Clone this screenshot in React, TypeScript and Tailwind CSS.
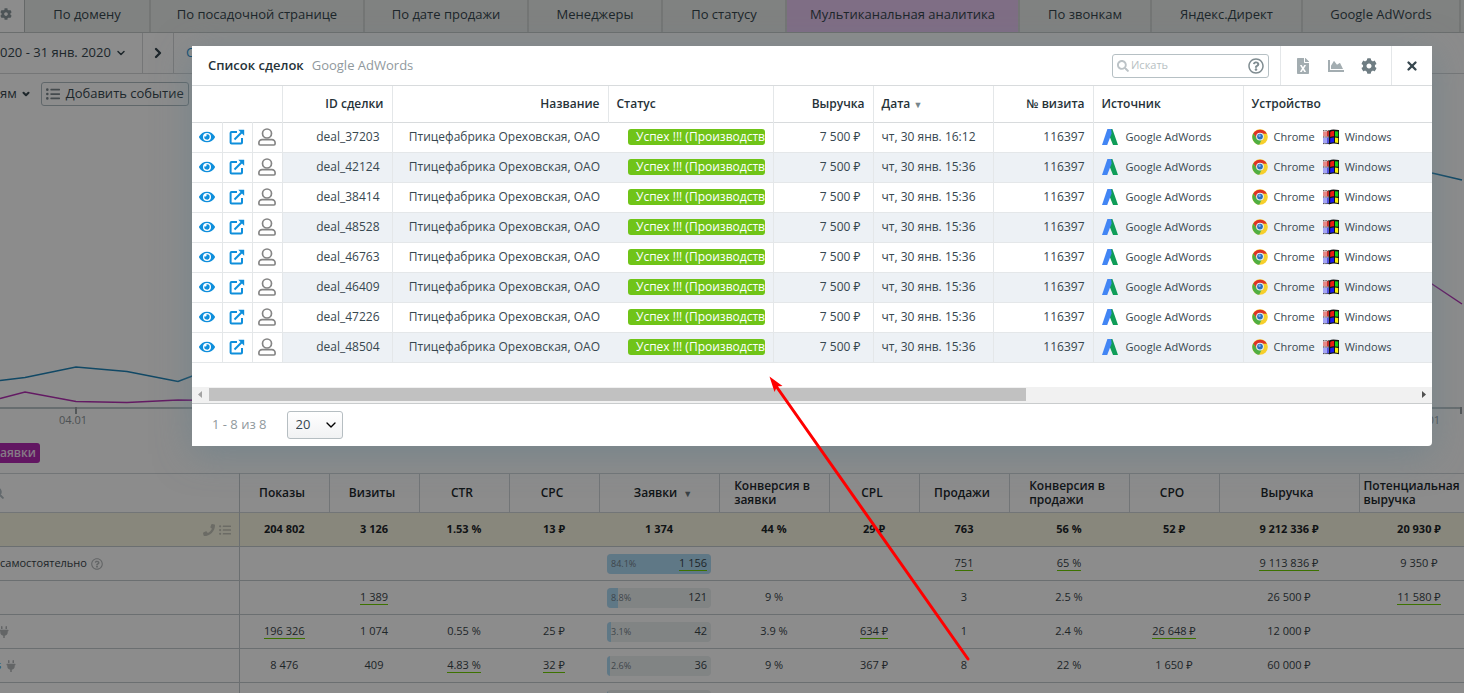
import type { ReactNode } from "react";
import {
  FaChartArea,
  FaCog,
  FaEye,
  FaFileExcel,
  FaListUl,
  FaPhone,
  FaPlug,
  FaRegQuestionCircle,
  FaSearch,
} from "react-icons/fa";
import { ChevronDown, ChevronRight, X } from "lucide-react";

const tabs = [
  { label: "По домену", width: "w-[126px]" },
  { label: "По посадочной странице", width: "w-[214px]" },
  { label: "По дате продажи", width: "w-[164px]" },
  { label: "Менеджеры", width: "w-[134px]" },
  { label: "По статусу", width: "w-[124px]" },
  { label: "Мультиканальная аналитика", width: "w-[233px]", accent: true },
  { label: "По звонкам", width: "w-[132px]" },
  { label: "Яндекс.Директ", width: "w-[151px]" },
  { label: "Google AdWords", width: "w-[158px]" },
];

const reportColumns = [
  { label: "Показы", width: "w-[90px] pr-1" },
  { label: "Визиты", width: "w-[90px] pr-1" },
  { label: "CTR", width: "w-[90px] pr-1" },
  { label: "CPC", width: "w-[90px] pr-1" },
  { label: "Заявки", width: "w-[120px] pl-2", sorted: true },
  { label: "Конверсия в заявки", width: "w-[110px] pr-1" },
  { label: "CPL", width: "w-[90px] pr-1" },
  { label: "Продажи", width: "w-[90px] pr-1" },
  { label: "Конверсия в продажи", width: "w-[120px] pr-1" },
  { label: "CPO", width: "w-[90px] pr-1" },
  { label: "Выручка", width: "w-[140px] pr-1" },
  { label: "Потенциальная выручка", width: "w-[120px] pr-4 pl-1" },
];

const totals = ["204 802", "3 126", "1.53 %", "13 ₽", "1 374", "44 %", "29 ₽", "763", "56 %", "52 ₽", "9 212 336 ₽", "20 930 ₽"];

type ReportRow = {
  title: ReactNode;
  share: string;
  fill: number;
  cells: string[];
};

const reportRows: ReportRow[] = [
  {
    title: (
      <>
        самостоятельно <FaRegQuestionCircle className="ml-1 size-3 text-[#b4b8ba]" />
      </>
    ),
    share: "84.1%",
    fill: 100,
    cells: ["", "", "", "", "*1 156", "", "", "*751", "*65 %", "", "*9 113 836 ₽", "9 350 ₽"],
  },
  {
    title: null,
    share: "8.8%",
    fill: 10.5,
    cells: ["", "*1 389", "", "", "121", "9 %", "", "3", "2.5 %", "", "26 500 ₽", "*11 580 ₽"],
  },
  {
    title: <FaPlug className="-ml-0.5 size-3 text-[#b4b8ba]" />,
    share: "3.1%",
    fill: 3.7,
    cells: ["*196 326", "1 074", "0.55 %", "25 ₽", "42", "3.9 %", "*634 ₽", "1", "2.4 %", "*26 648 ₽", "12 000 ₽", ""],
  },
  {
    title: (
      <>
        <span className="-ml-1 text-[#1d8fd1]">s</span> <FaPlug className="ml-1 size-3 text-[#b4b8ba]" />
      </>
    ),
    share: "2.6%",
    fill: 3,
    cells: ["8 476", "409", "*4.83 %", "*32 ₽", "36", "9 %", "367 ₽", "8", "22 %", "1 650 ₽", "60 000 ₽", ""],
  },
  { title: null, share: "", fill: 1, cells: ["", "", "", "", "", "", "", "", "", "", "", ""] },
];

const deals = [
  { id: "deal_37203", date: "чт, 30 янв. 16:12" },
  { id: "deal_42124", date: "чт, 30 янв. 15:36" },
  { id: "deal_38414", date: "чт, 30 янв. 15:36" },
  { id: "deal_48528", date: "чт, 30 янв. 15:36" },
  { id: "deal_46763", date: "чт, 30 янв. 15:36" },
  { id: "deal_46409", date: "чт, 30 янв. 15:36" },
  { id: "deal_47226", date: "чт, 30 янв. 15:36" },
  { id: "deal_48504", date: "чт, 30 янв. 15:36" },
];

function OpenIcon() {
  return (
    <svg viewBox="0 0 16 16" className="size-4" fill="none" stroke="#0f8fdc" strokeWidth="2">
      <path d="M8 3H2.6a1 1 0 0 0-1 1v9.4a1 1 0 0 0 1 1H12a1 1 0 0 0 1-1V9" />
      <path d="M5.5 10.5L13 3" />
      <path d="M9.3 .8H15.2V6.7Z" fill="#0f8fdc" stroke="none" />
    </svg>
  );
}

function PersonIcon() {
  return (
    <svg viewBox="0 0 16 16" className="size-[18px]" fill="none" stroke="#858585" strokeWidth="1.5">
      <circle cx="8" cy="4.9" r="4" />
      <path d="M3.6 10.3h8.8a2.8 2.8 0 0 1 2.8 2.8v1a1 1 0 0 1-1 1H1.8a1 1 0 0 1-1-1v-1a2.8 2.8 0 0 1 2.8-2.8Z" />
    </svg>
  );
}

function AdWordsIcon() {
  return (
    <svg viewBox="0 0 16 16" className="size-4">
      <path d="M6 0H10.4L16 16H11L7 6Z" fill="#0f9d58" />
      <path d="M5.4 0H9.2L9.6 4.500L5.200 16H0Z" fill="#4285f4" />
    </svg>
  );
}

function ChromeIcon() {
  return (
    <svg viewBox="0 0 16 16" className="size-4">
      <circle cx="8" cy="8" r="7.8" fill="#f6cf2c" />
      <path d="M1.2 4.6A7.8 7.8 0 0 1 14.9 4.8L8 4.6L5 10Z" fill="#dd3226" />
      <path d="M1.3 4.2A7.8 7.8 0 0 0 7.2 15.8L9.6 11L4.6 9.4Z" fill="#4fae42" />
      <circle cx="8" cy="7.600" r="3.9" fill="#e8eef4" />
      <circle cx="8" cy="7.600" r="2.9" fill="#2b6fc0" />
      <circle cx="7.600" cy="6.700" r="1.2" fill="#79aee6" />
    </svg>
  );
}

function WindowsIcon() {
  return (
    <svg viewBox="0 0 16 16" className="size-4">
      <path d="M6 1.400C9 0 12 .5 16 1V15.200C12 14.400 10 14.400 6 15.400Z" fill="#111" />
      <path d="M7.2 2.900C8.500 2 10 1.900 11 2V7.300C10 7.200 8.500 7.300 7.200 7.900Z" fill="#ee1a12" />
      <path d="M12 2.200L15.200 2.600V7.800L12 7.400Z" fill="#18d018" />
      <path d="M7.2 9.200C8.500 8.500 10 8.400 11 8.500V13.400C10 13.200 8.500 13.400 7.200 14.100Z" fill="#1c1cf0" />
      <path d="M12 8.600L15.200 9V14L12 13.500Z" fill="#f8f00c" />
      <path d="M0 2.500H6V7.600H0Z" fill="#e58a88" />
      <path d="M0 8.400H6V14.500H0Z" fill="#a4a4f4" />
      <path d="M4 2H6V7.600H4Z" fill="#c8322c" />
      <path d="M4 8.600H6V15H4Z" fill="#5454e0" />
      <path d="M0 1.700H7M0 8H7M0 14.600H7" stroke="#333" strokeWidth=".9" strokeDasharray="1.5 .8" />
    </svg>
  );
}

function TrendChart() {
  return (
    <svg viewBox="0 0 1464 325" className="block h-[325px] w-full shrink-0" preserveAspectRatio="none" fill="none" aria-hidden="true">
      <path d="M0 302H1462" stroke="#bcc6ca" strokeWidth="2" />
      <path d="M76 301V308M1461 301V308" stroke="#99a1a4" strokeWidth="2" />
      <path d="M0 274.500L25 271.500L76 261L127 265.500L178 275.500L229 256L1400 50L1432 67L1462 74" stroke="#1f84b8" strokeWidth="1.500" />
      <path d="M0 292.500L25 286L76 295.500L127 296.500L178 294L229 294.500L1400 150L1432 178L1462 198" stroke="#b530b5" strokeWidth="1.500" />
      <text x="59" y="318" fontSize="11" fill="#8b9498">04.01</text>
      <text x="1412" y="318" fontSize="11" fill="#8b9498">31.01</text>
    </svg>
  );
}

function Value({ text }: { text: string }) {
  if (!text.startsWith("*")) return <>{text}</>;
  return <span className="inline-block border-b border-[#6fd000] leading-3.5">{text.slice(1)}</span>;
}

function Report() {
  return (
    <table className="w-[1479px] table-fixed border-collapse text-[11px] text-[#39454a]">
      <thead>
        <tr className="h-[39px] border-y border-[#cfd6d9] text-xs leading-3.5 text-[#1d282d]">
          <th className="w-[239px] border-r border-[#c4cbce] text-left">
            <FaSearch className="-ml-2 size-3 text-[#b4c0c6]" />
          </th>
          {reportColumns.map((column) => (
            <th key={column.label} className={`${column.width} border-r border-[#cfd6d9] py-0 font-semibold`}>
              <span className="inline-block text-left">
                {column.label.startsWith("Конверсия") ? (
                  <>
                    Конверсия в<br />
                    {column.label.slice(12)}
                  </>
                ) : (
                  column.label
                )}
                {column.sorted && <span className="ml-1.5 text-[9px] text-[#6b787e]">▼</span>}
              </span>
            </th>
          ))}
        </tr>
      </thead>
      <tbody>
        <tr className="h-[34px] border-b border-[#c4cbce] bg-[#f8f6e2] text-[11px] font-bold text-[#1d2529]">
          <td className="border-r border-[#c4cbce]">
            <div className="flex justify-end gap-1 pr-2 text-[#c3c3b8]">
              <FaPhone className="size-3" />
              <FaListUl className="size-3" />
            </div>
          </td>
          {totals.map((total, index) => (
            <td key={index} className="text-center">
              {total}
            </td>
          ))}
        </tr>
        {reportRows.map((row, index) => (
          <tr key={index} className="h-[34px] border-b border-[#c4cbce]">
            <td className="border-r border-[#c4cbce] p-0">
              <div className="flex items-center">{row.title}</div>
            </td>
            {row.cells.map((cell, column) => (
              <td key={column} className="p-0 text-center">
                {column === 4 ? (
                  <div className="relative mx-2 flex h-5 items-center justify-between overflow-hidden rounded-sm bg-[#ebf0f1] px-1">
                    <div className="absolute inset-y-0 left-0 bg-[#addaf5]" style={{ width: `${row.fill}%` }} />
                    <span className="relative text-[9px] text-[#74828a]">{row.share}</span>
                    <span className="relative flex items-center">
                      <Value text={cell} />
                    </span>
                  </div>
                ) : (
                  <Value text={cell} />
                )}
              </td>
            ))}
          </tr>
        ))}
      </tbody>
    </table>
  );
}

function Page() {
  return (
    <main className="flex h-full flex-col overflow-hidden bg-white text-[#37474f]">
      <nav className="flex h-[33px] shrink-0 border-b border-[#c3c8c8] bg-[#e9edeb]">
        <div className="flex w-[25px] shrink-0 items-center border-r border-[#b9bdbd] bg-white pb-1">
          <FaCog className="size-3 text-[#8d999e]" />
        </div>
        {tabs.map((tab) => (
          <a
            key={tab.label}
            href="#"
            className={`${tab.width} ${tab.accent ? "bg-[#e8c8f2]" : ""} flex shrink-0 items-center justify-center border-r-2 border-[#d3d7d6] pb-0.5 text-[13px]`}
          >
            {tab.label}
          </a>
        ))}
      </nav>
      <div className="flex h-[41px] shrink-0 border-b border-[#d5d8d9] text-[13px]">
        <button className="flex w-[143px] items-center gap-1 whitespace-nowrap border-r border-[#d5d8d9]">
          020 - 31 янв. 2020
          <ChevronDown className="size-3" strokeWidth={3} />
        </button>
        <button aria-label="Вперёд" className="flex w-[31px] items-center justify-center border-r border-[#d5d8d9]">
          <ChevronRight className="size-4" strokeWidth={3.5} />
        </button>
        <a href="#" className="flex items-center pl-3 text-[#1d8fd1]">С</a>
      </div>
      <div className="flex h-8 shrink-0 items-end gap-2.5 text-[13px]">
        <button className="flex h-6 items-center gap-1">
          ям
          <ChevronDown className="size-2.5" strokeWidth={5} />
        </button>
        <button className="flex h-6 items-center gap-1.5 whitespace-nowrap rounded-[3px] border border-[#b0bcc2] px-1">
          <FaListUl className="size-3.5 text-[#7d888d]" />
          Добавить событие
        </button>
      </div>
      <TrendChart />
      <div className="flex h-[42px] shrink-0 items-start pt-3">
        <button className="h-5 w-10 whitespace-nowrap rounded-r-[3px] bg-[#b329b3] pr-2 text-right text-xs font-semibold text-[#f3dff3]">
          аявки
        </button>
      </div>
      <Report />
    </main>
  );
}

const head = "border-l border-[#e4e7e9] px-2 font-semibold";
const cell = "border-l border-[#e4e7e9] px-2";

function DealsTable() {
  return (
    <table className="w-full table-fixed border-collapse whitespace-nowrap text-xs text-[#37474f]">
      <thead>
        <tr className="h-[36px] border-b border-[#d8dbdd] text-[#263238]">
          <th colSpan={3} className="w-[90px]" aria-label="Действия" />
          <th className={`${head} w-[110px] text-right`}>ID сделки</th>
          <th className={`${head} w-[216px] text-right`}>Название</th>
          <th className={`${head} w-[165px] text-left`}>Статус</th>
          <th className={`${head} w-[100px] text-right`}>Выручка</th>
          <th className={`${head} w-[120px] text-left`}>
            Дата <span className="text-[9px] text-[#78868c]">▼</span>
          </th>
          <th className={`${head} w-[100px] text-right`}>№ визита</th>
          <th className={`${head} w-[150px] text-left`}>Источник</th>
          <th className={`${head} text-left`}>Устройство</th>
        </tr>
      </thead>
      <tbody>
        {deals.map((deal, index) => {
          const tint = index % 2 ? "bg-[#edf1f5]" : "";
          return (
            <tr key={deal.id} className="h-[30px] border-b border-[#e4e7e9]">
              <td>
                <button aria-label="Просмотр" className="flex w-full justify-center">
                  <FaEye className="size-4 text-[#0f8fdc]" />
                </button>
              </td>
              <td className="border-l border-[#e4e7e9]">
                <button aria-label="Открыть" className="flex w-full justify-center">
                  <OpenIcon />
                </button>
              </td>
              <td className="border-l border-[#e4e7e9]">
                <button aria-label="Клиент" className="flex w-full justify-center">
                  <PersonIcon />
                </button>
              </td>
              <td className={`${tint} border-l border-[#e4e7e9] pr-3 text-right`}>{deal.id}</td>
              <td className={`${tint} ${cell} text-right`}>Птицефабрика Ореховская, ОАО</td>
              <td className={`${tint} pl-5 pr-2`}>
                <div className="h-4 overflow-hidden rounded-[3px] bg-[#70c418] pl-2 font-medium leading-4 text-white">
                  Успех !!! (Производство)
                </div>
              </td>
              <td className={`${tint} border-l border-[#e4e7e9] pr-3 text-right`}>7 500 ₽</td>
              <td className={`${tint} ${cell}`}>{deal.date}</td>
              <td className={`${tint} ${cell} text-right`}>116397</td>
              <td className={`${tint} ${cell} text-[11px]`}>
                <div className="flex items-center gap-2">
                  <AdWordsIcon />
                  Google AdWords
                </div>
              </td>
              <td className={`${tint} ${cell} text-[11px]`}>
                <div className="flex items-center gap-1.5">
                  <ChromeIcon />
                  Chrome
                  <span className="ml-0.5">
                    <WindowsIcon />
                  </span>
                  Windows
                </div>
              </td>
            </tr>
          );
        })}
      </tbody>
    </table>
  );
}

function DealsDialog() {
  return (
    <section
      role="dialog"
      aria-label="Список сделок"
      className="relative flex flex-col overflow-hidden rounded-br bg-white shadow-[0_8px_36px_rgba(96,125,139,0.5)]"
    >
      <header className="flex h-10 items-stretch border-b border-[#d8dbdd]">
        <div className="flex flex-1 items-center gap-2 pl-4">
          <h2 className="text-[13px] font-semibold text-[#263238]">Список сделок</h2>
          <span className="text-[13px] text-[#90999d]">Google AdWords</span>
        </div>
        <label className="mr-[11px] flex h-6 w-[157px] items-center gap-0.5 self-center rounded-[3px] border border-[#b6c0c4] px-1">
          <FaSearch className="size-3 shrink-0 text-[#bcc3c7]" />
          <input aria-label="Искать" placeholder="Искать" className="min-w-0 flex-1 text-[11px] outline-none placeholder:text-[#b7bfc3]" />
          <FaRegQuestionCircle className="size-4 shrink-0 text-[#7f8c91]" />
        </label>
        <div className="flex items-center gap-[17px] border-x border-[#e4e7e9] px-3.5">
          <button aria-label="Экспорт в Excel"><FaFileExcel className="size-4 text-[#a3adb1]" /></button>
          <button aria-label="График"><FaChartArea className="size-4 text-[#a3adb1]" /></button>
          <button aria-label="Настройки"><FaCog className="size-4 text-[#6f7d83]" /></button>
        </div>
        <button aria-label="Закрыть" className="flex w-10 items-center justify-center">
          <X className="size-3.5 text-[#37474f]" strokeWidth={4} />
        </button>
      </header>
      <DealsTable />
      <div className="mt-6 flex h-[17px] items-center border-b border-[#c9cccd] bg-[#f1f1f1]">
        <svg viewBox="0 0 17 17" className="size-[17px]"><path d="M10 5V12L6 8.500Z" fill="#a3a3a3" /></svg>
        <div className="flex-1">
          <div className="h-[13px] w-[817px] bg-[#c1c1c1]" />
        </div>
        <svg viewBox="0 0 17 17" className="size-[17px]"><path d="M7 5V12L11 8.500Z" fill="#505050" /></svg>
      </div>
      <footer className="flex h-[42px] items-center gap-5 pl-5 text-[13px]">
        <span className="text-[#90999d]">1 - 8 из 8</span>
        <div className="relative">
          <select
            aria-label="Строк на странице"
            defaultValue="20"
            className="h-7 w-14 appearance-none rounded-[3px] border border-[#b6bec2] bg-linear-to-b from-white to-[#f1f2f3] pl-2 text-[#37474f]"
          >
            <option>20</option>
          </select>
          <ChevronDown className="pointer-events-none absolute right-1 top-1.5 size-4" strokeWidth={2} />
        </div>
      </footer>
    </section>
  );
}

export default function App() {
  return (
    <div className="relative h-screen overflow-hidden font-['Open_Sans','Noto_Sans',sans-serif]">
      <Page />
      <div className="absolute inset-0 bg-black/45 pl-48 pr-8 pt-[46px]">
        <DealsDialog />
      </div>
      <svg className="pointer-events-none absolute left-[760px] top-[370px] h-[300px] w-[220px]" viewBox="0 0 220 300" aria-hidden="true">
        <path d="M208 289L16 16" stroke="#f00" strokeWidth="3" strokeLinecap="round" />
        <path d="M9.500 6.500L22.500 16L17 16.500L14.500 22Z" fill="#f00" />
      </svg>
    </div>
  );
}
